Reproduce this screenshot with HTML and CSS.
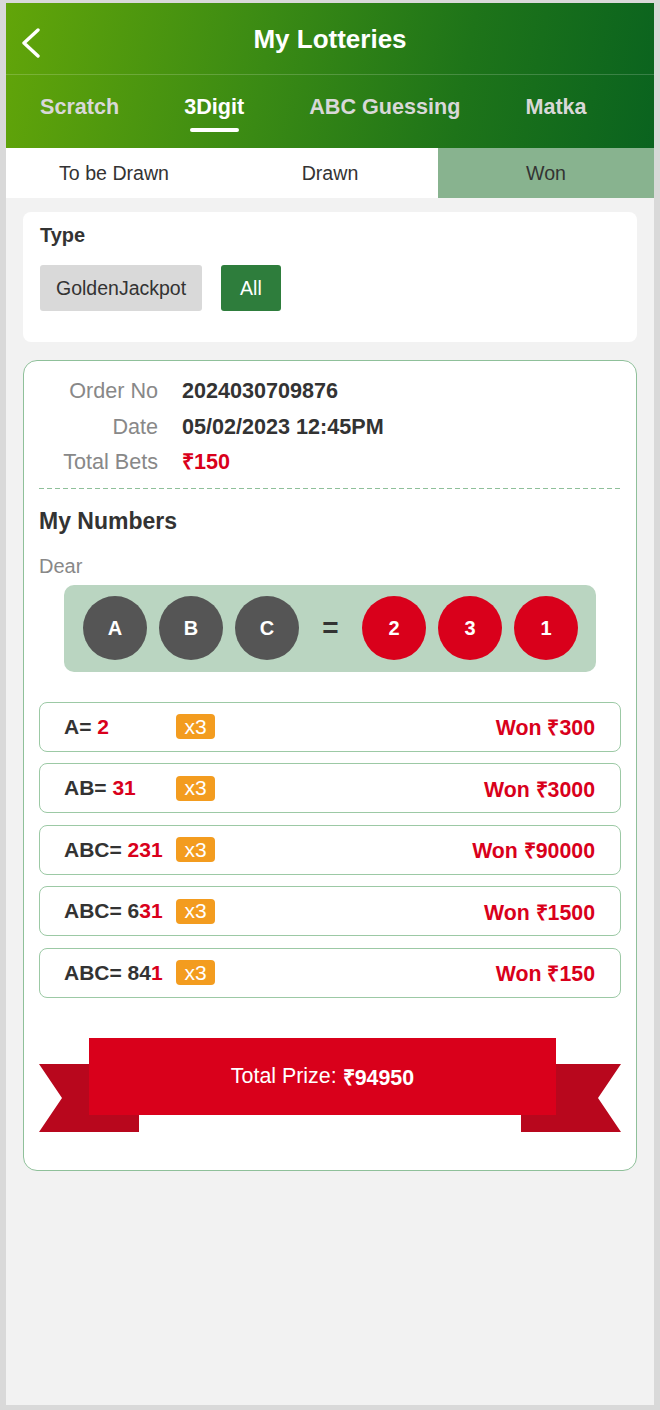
FILE: index.html
```html
<!DOCTYPE html>
<html>
<head>
<meta charset="utf-8">
<link rel="stylesheet" href="styles.css">
</head>
<body>
<div class="app">
  <header class="header">
    <div class="titlebar">
      <svg class="back" width="20" height="30" viewBox="0 0 20 30"><polyline points="17,2 3,15 17,28" fill="none" stroke="#fff" stroke-width="3.4" stroke-linecap="round" stroke-linejoin="round"/></svg>
      <h1 class="title">My Lotteries</h1>
    </div>
    <nav class="tabs">
      <span class="tab">Scratch</span>
      <span class="tab active">3Digit</span>
      <span class="tab">ABC Guessing</span>
      <span class="tab">Matka</span>
    </nav>
  </header>
  <div class="subtabs">
    <span class="subtab">To be Drawn</span>
    <span class="subtab">Drawn</span>
    <span class="subtab on">Won</span>
  </div>
  <main class="content">
    <section class="card type-card">
      <div class="type-title">Type</div>
      <div class="type-btns">
        <span class="btn grey">GoldenJackpot</span>
        <span class="btn green">All</span>
      </div>
    </section>
    <section class="order">
      <div class="info">
        <span class="lbl">Order No</span><span class="val">2024030709876</span>
        <span class="lbl">Date</span><span class="val">05/02/2023 12:45PM</span>
        <span class="lbl">Total Bets</span><span class="val red">₹150</span>
      </div>
      <div class="dash"></div>
      <div class="mynum">My Numbers</div>
      <div class="dear">Dear</div>
      <div class="balls">
        <span class="ball dark">A</span>
        <span class="ball dark">B</span>
        <span class="ball dark">C</span>
        <span class="eq">=</span>
        <span class="ball redb">2</span>
        <span class="ball redb">3</span>
        <span class="ball redb">1</span>
      </div>
      <div class="results">
        <div class="row"><span class="rl">A= <b class="red">2</b></span><span class="badge">x3</span><span class="won">Won ₹300</span></div>
        <div class="row"><span class="rl">AB= <b class="red">31</b></span><span class="badge">x3</span><span class="won">Won ₹3000</span></div>
        <div class="row"><span class="rl">ABC= <b class="red">231</b></span><span class="badge">x3</span><span class="won">Won ₹90000</span></div>
        <div class="row"><span class="rl">ABC= 6<b class="red">31</b></span><span class="badge">x3</span><span class="won">Won ₹1500</span></div>
        <div class="row"><span class="rl">ABC= 84<b class="red">1</b></span><span class="badge">x3</span><span class="won">Won ₹150</span></div>
      </div>
      <div class="ribbon">
        <svg class="tail left" width="100" height="68" viewBox="0 0 100 68"><polygon points="0,0 100,0 100,68 0,68 23,34" fill="#b8071d"/></svg>
        <svg class="tail right" width="100" height="68" viewBox="0 0 100 68"><polygon points="0,0 100,0 77,34 100,68 0,68" fill="#b8071d"/></svg>
        <div class="banner">Total Prize: <b>₹94950</b></div>
      </div>
    </section>
  </main>
</div>
</body>
</html>
```
FILE: styles.css
```css
* { box-sizing: border-box; margin: 0; padding: 0; }
html { background: #d9d9d9; }
body {
  margin: 0;
  padding: 3px 6px 5px;
  font-family: "Liberation Sans", Arial, sans-serif;
  color: #333;
}
.app {
  background: #f2f2f2;
  min-height: 1402px;
}
.header {
  background: linear-gradient(100deg, #62a509 0%, #3a8a14 40%, #1e7419 70%, #0a631f 100%);
  color: #fff;
}
.titlebar {
  height: 72px;
  display: flex;
  align-items: center;
  justify-content: center;
  position: relative;
  border-bottom: 1px solid rgba(255,255,255,0.18);
}
.back { position: absolute; left: 15px; top: 25px; }
.title { font-size: 26px; font-weight: bold; padding-top: 2px; }
.tabs {
  height: 73px;
  display: flex;
  align-items: center;
  gap: 65px;
  padding-left: 34px;
  padding-bottom: 10px;
}
.tab {
  font-size: 21.6px;
  font-weight: bold;
  color: #d8d8d8;
  position: relative;
}
.tab.active { color: #fff; }
.tab.active::after {
  content: "";
  position: absolute;
  left: 6px;
  right: 5px;
  bottom: -12px;
  height: 4px;
  border-radius: 2px;
  background: #fff;
}
.subtabs {
  display: grid;
  grid-template-columns: 1fr 1fr 1fr;
  height: 50px;
  background: #fff;
}
.subtab {
  display: flex;
  align-items: center;
  justify-content: center;
  font-size: 19.6px;
  color: #333;
}
.subtab.on { background: #88b38f; }
.content { padding: 14px 17px 0; display: flex; flex-direction: column; gap: 18px; }
.card { background: #fff; border-radius: 8px; }
.type-card { padding: 12px 17px 31px; }
.type-title { font-size: 20px; font-weight: bold; line-height: 22px; }
.type-btns { display: flex; gap: 19px; margin-top: 19px; }
.btn {
  height: 46px;
  display: flex;
  align-items: center;
  font-size: 19.5px;
  border-radius: 3px;
}
.btn.grey { background: #d9d9d9; padding: 0 16px; color: #333; }
.btn.green { background: #2e7d3c; color: #fff; padding: 0 19px; }
.order {
  background: #fff;
  border: 1px solid #8fc09a;
  border-radius: 14px;
  padding: 12px 15px 38px;
}
.info {
  display: grid;
  grid-template-columns: 119px 1fr;
  column-gap: 24px;
  line-height: 35.5px;
  font-size: 21.6px;
}
.lbl { text-align: right; color: #888; }
.val { font-weight: bold; color: #333; }
.red { color: #d9001b; }
.dash {
  height: 1px;
  margin-top: 8px;
  background: repeating-linear-gradient(90deg, #8fc09a 0 5px, transparent 5px 8px);
}
.mynum { font-size: 23px; font-weight: bold; margin-top: 17px; line-height: 30px; }
.dear { font-size: 20px; color: #888; margin-top: 18px; line-height: 24px; }
.balls {
  margin: 7px 25px 0;
  height: 87px;
  background: #bad5c1;
  border-radius: 10px;
  display: flex;
  align-items: center;
  gap: 12px;
  padding: 0 18px 0 19px;
}
.ball {
  width: 64px;
  height: 64px;
  border-radius: 50%;
  display: flex;
  align-items: center;
  justify-content: center;
  color: #fff;
  font-weight: bold;
  font-size: 20px;
}
.ball.dark { background: #555; }
.ball.redb { background: #d9001b; }
.eq { width: 39px; text-align: center; font-size: 28px; font-weight: bold; color: #333; }
.results { margin-top: 30px; display: flex; flex-direction: column; gap: 11.5px; }
.row {
  height: 50px;
  border: 1.5px solid #9cc9a5;
  border-radius: 8px;
  display: flex;
  align-items: center;
  padding: 0 25px 0 24px;
}
.rl { width: 112px; font-size: 21px; font-weight: bold; white-space: nowrap; color: #333; }
.rl b { font-weight: bold; }
.badge {
  background: #f39c1f;
  color: #fff;
  font-size: 21px;
  border-radius: 4px;
  height: 25px;
  width: 39px;
  display: flex;
  align-items: center;
  justify-content: center;
}
.won { margin-left: auto; font-size: 21.3px; font-weight: bold; color: #d9001b; }
.ribbon { position: relative; margin-top: 40px; height: 94px; }
.tail { position: absolute; top: 26px; }
.tail.left { left: 0; }
.tail.right { right: 0; }
.banner {
  position: relative;
  margin: 0 65px 0 50px;
  height: 77px;
  background: #d9001b;
  color: #fff;
  font-size: 21.4px;
  display: flex;
  align-items: center;
  justify-content: center;
  gap: 6px;
}
```
